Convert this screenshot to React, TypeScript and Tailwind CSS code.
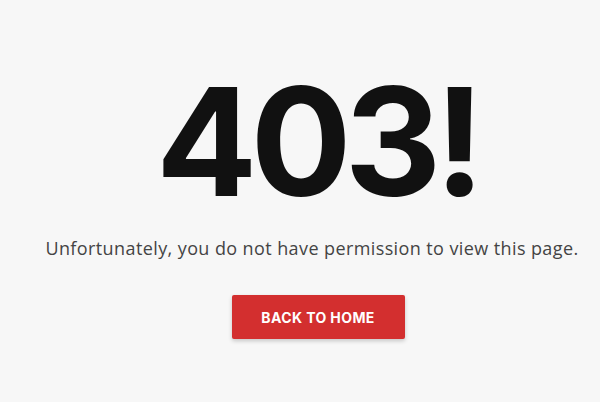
export default function App() {
  return (
    <div className="w-[600px] h-[402px] bg-[#f7f7f7] flex flex-col items-center pl-[34px] overflow-hidden font-['Open_Sans',sans-serif]">
      <div className="mt-[52px] text-[150px] leading-[180px] font-bold text-[#111111] tracking-[-7px] font-['Inter',sans-serif]">403!</div>
      <p className="mt-[3px] mr-[10px] text-[18px] tracking-[0.4px] text-[#444444]">Unfortunately, you do not have permission to view this page.</p>
      <button className="mt-[33px] ml-[2px] w-[173px] h-[44px] bg-[#d32f2f] text-white text-[14px] tracking-[0.4px] font-bold rounded-[2px] shadow-[0_2px_4px_rgba(0,0,0,0.2)] font-['Inter',sans-serif]">BACK TO HOME</button>
    </div>
  );
}
